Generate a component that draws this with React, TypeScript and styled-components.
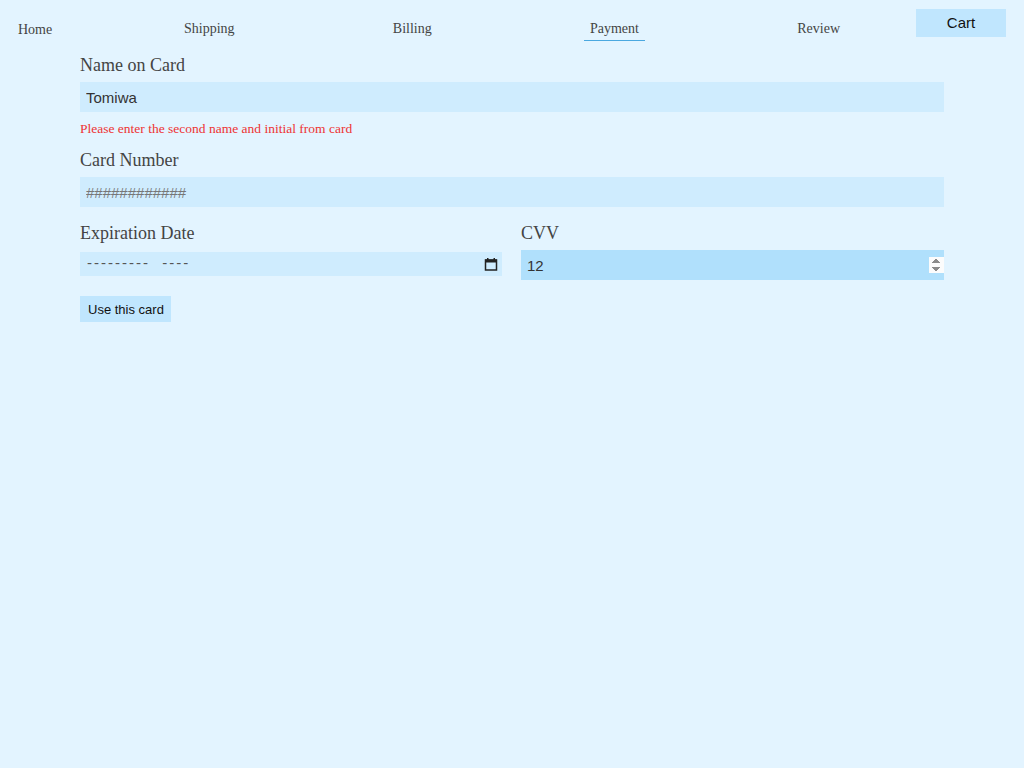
import React from "react";
import styled, { createGlobalStyle, css } from "styled-components";

const GlobalStyle = createGlobalStyle`
  html, body {
    margin: 0;
    padding: 0;
    background: #e3f4ff;
    font-family: "Liberation Serif", "Times New Roman", serif;
    color: #444;
  }
  #root {
    min-height: 100vh;
  }
`;

const Page = styled.div`
  min-height: 768px;
  background: #e3f4ff;
`;

const Nav = styled.nav`
  display: flex;
  align-items: flex-start;
  padding-top: 9px;
  height: 35px;
`;

const HomeLink = styled.a`
  width: 90px;
  padding: 13px 0 0 18px;
  font-size: 14px;
  line-height: 16px;
  color: #444;
  text-decoration: none;
`;

const Steps = styled.div`
  flex: 1;
  display: flex;
  justify-content: space-between;
  padding: 0 70px;
`;

const Step = styled.a<{ $active?: boolean }>`
  padding: 12px 6px 3px;
  font-size: 14px;
  line-height: 16px;
  color: #444;
  text-decoration: none;
  border-bottom: 1px solid transparent;
  ${(p) =>
    p.$active &&
    css`
      border-bottom-color: #4aa8e0;
    `}
`;

const CartButton = styled.button`
  width: 90px;
  height: 28px;
  margin-right: 18px;
  border: none;
  background: #c0e6fe;
  font-family: "Liberation Sans", Arial, sans-serif;
  font-size: 15px;
  color: #111;
  padding: 0 0 2px;
`;

const Form = styled.form`
  margin: 0 80px;
  display: flex;
  flex-direction: column;
  align-items: stretch;
`;

const Label = styled.label<{ $top?: number }>`
  display: block;
  font-size: 18px;
  line-height: 22px;
  color: #444;
  margin: ${(p) => p.$top ?? 0}px 0 6px;
`;

const TextInput = styled.input`
  display: block;
  box-sizing: border-box;
  width: 100%;
  height: 30px;
  padding: 0 6px;
  border: none;
  outline: none;
  background: #cfecfe;
  font-family: "Liberation Sans", Arial, sans-serif;
  font-size: 15px;
  color: #333;
  &::placeholder {
    color: #777;
  }
  &:focus {
    background: #b0e0fc;
  }
`;

const NumberInput = styled(TextInput)`
  padding-right: 0;
  &::-webkit-inner-spin-button {
    opacity: 1;
    height: 16px;
  }
`;

const DateBox = styled.div`
  position: relative;
  margin-top: 2px;
`;

const DateInput = styled(TextInput)`
  height: 24px;
  padding: 0 24px 3px 7px;
  letter-spacing: 2px;
  &::placeholder {
    color: #555;
  }
`;

const CalendarIcon = styled.svg`
  position: absolute;
  right: 4px;
  top: 5px;
  pointer-events: none;
`;

const ErrorText = styled.p`
  margin: 9px 0 0;
  font-size: 13.5px;
  line-height: 16px;
  color: #ee3333;
`;

const Row = styled.div`
  display: grid;
  grid-template-columns: 422px 1fr;
  column-gap: 19px;
  align-items: start;
`;

const Field = styled.div`
  display: flex;
  flex-direction: column;
`;

const SubmitButton = styled.button`
  align-self: flex-start;
  margin-top: 16px;
  height: 26px;
  padding: 0 7px 0 8px;
  border: none;
  background: #c0e6fe;
  font-family: "Liberation Sans", Arial, sans-serif;
  font-size: 13px;
  color: #111;
`;

const steps = ["Shipping", "Billing", "Payment", "Review"];

export default function App() {
  return (
    <Page>
      <GlobalStyle />
      <Nav>
        <HomeLink>Home</HomeLink>
        <Steps>
          {steps.map((s) => (
            <Step key={s} $active={s === "Payment"}>
              {s}
            </Step>
          ))}
        </Steps>
        <CartButton>Cart</CartButton>
      </Nav>
      <Form onSubmit={(e) => e.preventDefault()}>
        <Label $top={10}>Name on Card</Label>
        <TextInput defaultValue="Tomiwa" />
        <ErrorText>Please enter the second name and initial from card</ErrorText>
        <Label $top={12}>Card Number</Label>
        <TextInput placeholder="############" />
        <Row>
          <Field>
            <Label $top={15}>Expiration Date</Label>
            <DateBox>
              <DateInput placeholder={"---------\u00a0\u00a0----"} />
              <CalendarIcon width="14" height="14" viewBox="0 0 14 14">
                <rect x="1.5" y="3" width="11" height="10" fill="none" stroke="#222" strokeWidth="1.5" />
                <rect x="1" y="2.5" width="12" height="3" fill="#222" />
                <rect x="3" y="1" width="1.5" height="2" fill="#222" />
                <rect x="9.5" y="1" width="1.5" height="2" fill="#222" />
              </CalendarIcon>
            </DateBox>
          </Field>
          <Field>
            <Label $top={15}>CVV</Label>
            <NumberInput type="number" defaultValue="12" autoFocus />
          </Field>
        </Row>
        <SubmitButton type="submit">Use this card</SubmitButton>
      </Form>
    </Page>
  );
}
